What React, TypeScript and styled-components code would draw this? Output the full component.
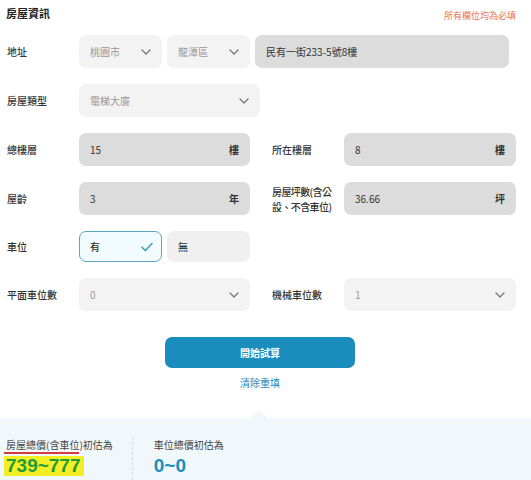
import React from 'react';
import styled, { createGlobalStyle } from 'styled-components';

const GlobalStyle = createGlobalStyle`
  html, body {
    margin: 0;
    padding: 0;
    background: #fff;
  }
  body {
    font-family: "Noto Sans CJK TC", "Noto Sans", "Liberation Sans", sans-serif;
    color: #333;
  }
`;

const Page = styled.div`
  width: 531px;
  height: 480px;
  overflow: hidden;
  display: flex;
  flex-direction: column;
`;

const Form = styled.div`
  padding: 3px 15px 0 7px;
  display: flex;
  flex-direction: column;
`;

const Header = styled.div`
  display: flex;
  justify-content: space-between;
  align-items: center;
  height: 20px;
  margin-bottom: 12px;
`;

const Title = styled.h2`
  margin: -1px 0 0 -1px;
  font-size: 11px;
  font-weight: 700;
  color: #222;
`;

const Required = styled.span`
  font-size: 9px;
  color: #e8704f;
  margin-top: 4px;
`;

const Rows = styled.div`
  display: flex;
  flex-direction: column;
  gap: 16px;
`;

const Row = styled.div`
  display: grid;
  grid-template-columns: 243px 244px;
  column-gap: 22px;
`;

const Field = styled.div<{ $right?: number }>`
  display: flex;
  align-items: center;
  padding-right: ${({ $right }) => $right ?? 0}px;
`;

const Label = styled.div<{ $tight?: boolean }>`
  width: 72px;
  flex-shrink: 0;
  font-size: 10px;
  font-weight: 500;
  color: #333;
  line-height: 15px;
  letter-spacing: ${({ $tight }) => ($tight ? '-0.6px' : 'normal')};
`;

const Controls = styled.div<{ $cols: string }>`
  flex: 1;
  display: grid;
  grid-template-columns: ${({ $cols }) => $cols};
  gap: 5px;
`;

const Box = styled.div<{ $filled?: boolean }>`
  height: 33px;
  box-sizing: border-box;
  border-radius: 7px;
  background: ${({ $filled }) => ($filled ? '#dcdcdc' : '#f3f3f3')};
  display: flex;
  align-items: center;
  justify-content: space-between;
  padding: 0 11px 0 11px;
  font-size: 10px;
  color: ${({ $filled }) => ($filled ? '#333' : '#999')};
`;

const Unit = styled.span`
  font-weight: 700;
  color: #333;
  font-size: 10px;
`;

const Choice = styled.div<{ $active?: boolean }>`
  height: 31px;
  box-sizing: border-box;
  border-radius: 7px;
  border: 1px solid ${({ $active }) => ($active ? '#5aa7c0' : 'transparent')};
  background: ${({ $active }) => ($active ? '#f2fbfd' : '#f0f0f0')};
  display: flex;
  align-items: center;
  justify-content: space-between;
  padding: 0 8px 0 10px;
  font-size: 10px;
  font-weight: 500;
  color: #333;
`;

const Chevron = () => (
  <svg width="10" height="6" viewBox="0 0 10 6" fill="none">
    <path d="M1 1l4 4 4-4" stroke="#777" strokeWidth="1.3" strokeLinecap="round" strokeLinejoin="round" />
  </svg>
);

const Check = () => (
  <svg width="12" height="10" viewBox="0 0 12 10" fill="none">
    <path d="M1 5.2l3.4 3.3L11 1.5" stroke="#3a9bb3" strokeWidth="1.5" strokeLinecap="round" strokeLinejoin="round" />
  </svg>
);

const Actions = styled.div`
  display: flex;
  flex-direction: column;
  align-items: center;
  margin-top: 26px;
  padding-right: 3px;
`;

const Submit = styled.button`
  width: 190px;
  height: 31px;
  border: none;
  border-radius: 7px;
  background: #1a8dbd;
  color: #fff;
  font-family: inherit;
  font-size: 10px;
  font-weight: 700;
`;

const Reset = styled.a`
  margin-top: 7px;
  font-size: 10px;
  color: #1a8dbd;
`;

const Result = styled.div`
  position: relative;
  margin-top: 28px;
  flex: 1;
  background: #f1f8fb;
  display: flex;
  align-items: stretch;
  padding: 19px 0 0 0;

  &::before {
    content: '';
    position: absolute;
    left: 250px;
    top: -8px;
    border-left: 9px solid transparent;
    border-right: 9px solid transparent;
    border-bottom: 8px solid #f1f8fb;
  }
`;

const ResultItem = styled.div<{ $divider?: boolean }>`
  display: flex;
  flex-direction: column;
  align-items: flex-start;
  padding: 0 19px 0 ${({ $divider }) => ($divider ? '21px' : '6px')};
  border-left: ${({ $divider }) => ($divider ? '1px dashed #d6dde2' : 'none')};
`;

const ResultLabel = styled.div`
  font-size: 10px;
  color: #444;
  line-height: 15px;
  white-space: nowrap;
`;

const Underlined = styled.span`
  border-bottom: 2px solid #d63a3a;
  margin-left: -2px;
  padding-left: 2px;
`;

const Amount = styled.div<{ $color: string; $mark?: boolean }>`
  margin-top: 4px;
  font-family: "Liberation Sans", Arial, sans-serif;
  font-size: 19px;
  font-weight: 700;
  line-height: 20px;
  color: ${({ $color }) => $color};
  background: ${({ $mark }) => ($mark ? '#f3ee25' : 'transparent')};
  margin-left: ${({ $mark }) => ($mark ? '-2px' : '0')};
  padding: 0 ${({ $mark }) => ($mark ? '3px' : '0')} 0 ${({ $mark }) => ($mark ? '2px' : '0')};
`;

export default function App() {
  return (
    <Page>
      <GlobalStyle />
      <Form>
        <Header>
          <Title>房屋資訊</Title>
          <Required>所有欄位均為必填</Required>
        </Header>
        <Rows>
          <Field $right={7}>
            <Label>地址</Label>
            <Controls $cols="83px 83px 1fr">
              <Box>桃園市<Chevron /></Box>
              <Box>龍潭區<Chevron /></Box>
              <Box $filled>民有一街233-5號8樓</Box>
            </Controls>
          </Field>
          <Field>
            <Label>房屋類型</Label>
            <Controls $cols="181px">
              <Box>電梯大廈<Chevron /></Box>
            </Controls>
          </Field>
          <Row>
            <Field>
              <Label>總樓層</Label>
              <Controls $cols="1fr">
                <Box $filled>15<Unit>樓</Unit></Box>
              </Controls>
            </Field>
            <Field>
              <Label>所在樓層</Label>
              <Controls $cols="1fr">
                <Box $filled>8<Unit>樓</Unit></Box>
              </Controls>
            </Field>
          </Row>
          <Row>
            <Field>
              <Label>屋齡</Label>
              <Controls $cols="1fr">
                <Box $filled>3<Unit>年</Unit></Box>
              </Controls>
            </Field>
            <Field>
              <Label $tight>房屋坪數(含公<br />設、不含車位)</Label>
              <Controls $cols="1fr">
                <Box $filled>36.66<Unit>坪</Unit></Box>
              </Controls>
            </Field>
          </Row>
          <Field>
            <Label>車位</Label>
            <Controls $cols="83px 83px">
              <Choice $active>有<Check /></Choice>
              <Choice>無</Choice>
            </Controls>
          </Field>
          <Row>
            <Field>
              <Label>平面車位數</Label>
              <Controls $cols="1fr">
                <Box>0<Chevron /></Box>
              </Controls>
            </Field>
            <Field>
              <Label>機械車位數</Label>
              <Controls $cols="1fr">
                <Box>1<Chevron /></Box>
              </Controls>
            </Field>
          </Row>
        </Rows>
        <Actions>
          <Submit>開始試算</Submit>
          <Reset>清除重填</Reset>
        </Actions>
      </Form>
      <Result>
        <ResultItem>
          <ResultLabel><Underlined>房屋總價(含車位</Underlined>)初估為</ResultLabel>
          <Amount $color="#1f9b3a" $mark>739~777</Amount>
        </ResultItem>
        <ResultItem $divider>
          <ResultLabel>車位總價初估為</ResultLabel>
          <Amount $color="#1a8dbd">0~0</Amount>
        </ResultItem>
      </Result>
    </Page>
  );
}
